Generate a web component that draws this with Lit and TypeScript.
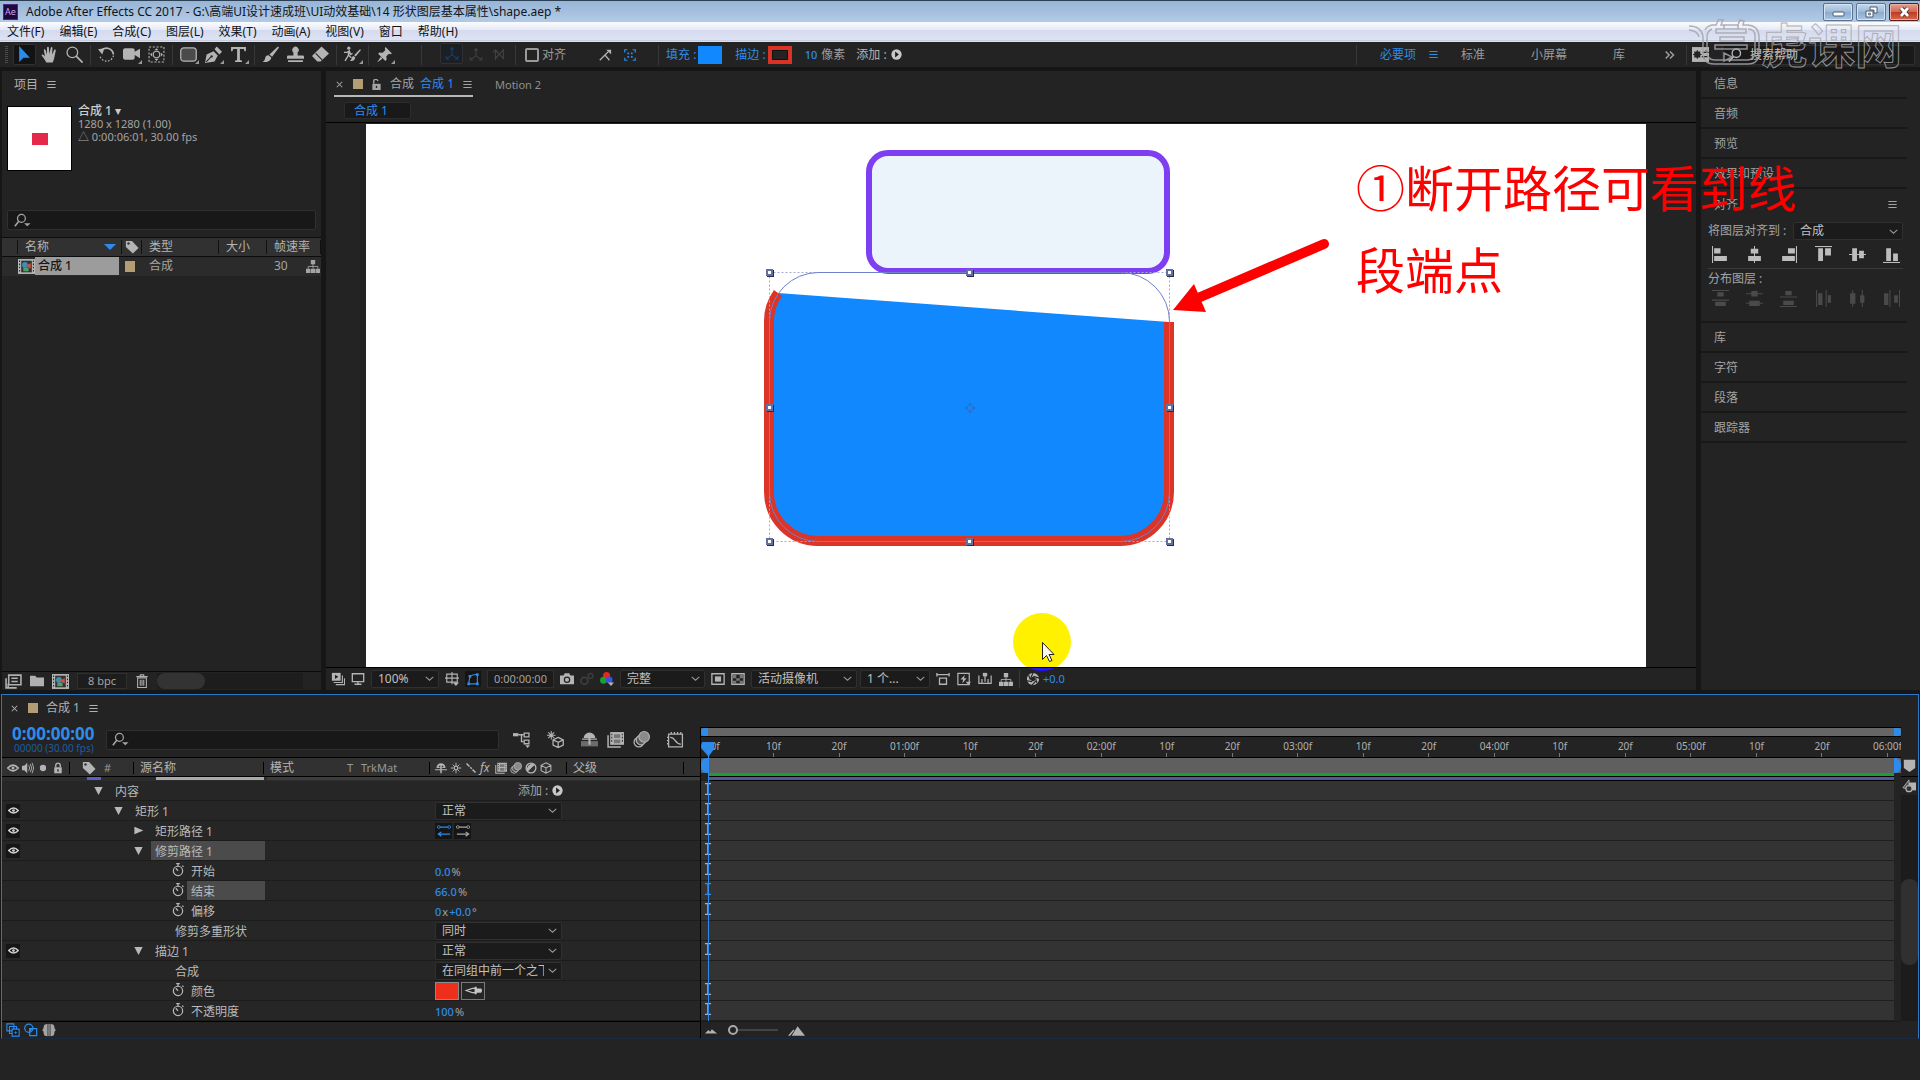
import { LitElement, html, css, svg, nothing } from "lit";
import { customElement, property } from "lit/decorators.js";
import { classMap } from "lit/directives/class-map.js";
import { styleMap } from "lit/directives/style-map.js";

/* Icon shapes, each drawn on a 16 x 16 grid with the current colour. */
const shapes: Record<string, unknown> = {
  arrow: svg`<path d="M3 0v15l4-4h6z" fill="currentColor"/>`,
  hand: svg`<path d="M5 15.500C4 13 1 10 0.500 8.500c.8-.9 2-.2 3.300 1.500L2.600 3.800c.2-1 1.400-1 1.700 0L5.500 8 5.700 1.500c.2-1 1.500-1 1.700 0L7.800 7.600 9.200 1.600c.4-1 1.600-.7 1.600.3L10.400 8l2-4.300c.6-.9 1.700-.4 1.500.6L12.500 11c-.3 2-1 3-1.500 4.500z" fill="currentColor"/>`,
  zoom: svg`<circle cx="6" cy="6" r="5" fill="none" stroke="currentColor" stroke-width="1.200"/><path d="M9.600 9.600l6 6" stroke="currentColor" stroke-width="1.600"/>`,
  rotate: svg`<path d="M3 4.500A6.500 6.500 0 0 1 14.500 8" fill="none" stroke="currentColor" stroke-width="1.600"/><path d="M0 3l6-1-2 6z" fill="currentColor"/><path d="M14.500 9A6.500 6.500 0 0 1 2 10" fill="none" stroke="currentColor" stroke-width="1.200" stroke-dasharray="1.500 1.500"/>`,
  camera: svg`<path d="M0 4q0-2 2-2h7q2 0 2 2v1.500l5-3v9l-5-3V11q0 2-2 2H2q-2 0-2-2z" fill="currentColor"/>`,
  panBehind: svg`<rect x="1" y="1" width="14" height="14" fill="none" stroke="currentColor" stroke-dasharray="2 1.500"/><circle cx="8" cy="8" r="3" fill="none" stroke="currentColor"/><path d="M8 2l2 2H6zM8 14l2-2H6zM2 8l2-2v4zM14 8l-2-2v4z" fill="currentColor"/>`,
  roundRect: svg`<rect x=".7" y="1.700" width="14.600" height="12.600" rx="3" fill="#4a4a4a" stroke="currentColor" stroke-width="1.200"/>`,
  pen: svg`<path d="M0 16l1.500-8L8 5l4 4-3 5.500z" fill="currentColor"/><path d="M9 3l2-2.500L16 5.500 13.500 8z" fill="currentColor"/><path d="M1 15l4.500-4.500" stroke="#232323"/><circle cx="6.200" cy="9.800" r="1.100" fill="#232323"/>`,
  type: svg`<path d="M1 1h14v4h-1.300L13 2.800H9.300v10.400l2 .6V15H4.700v-1.200l2-.6V2.800H3L2.300 5H1z" fill="currentColor"/>`,
  brush: svg`<path d="M15 .5l1 1L9.500 10 7 8zM6.300 8.800L8.800 11c-.8 3.500-4.500 4.500-8.300 4 2-1.200 2-2 2.500-4 .6-1.600 1.900-2.400 3.300-2.200z" fill="currentColor"/>`,
  stamp: svg`<path d="M6 6a3 3 0 1 1 4 0v3h5q1 0 1 1v2H0v-2q0-1 1-1h5zM1 13.500h14v1.500H1z" fill="currentColor"/>`,
  eraser: svg`<path d="M9 .5L16 7l-8 7.500H5L0 9.500z" fill="currentColor"/><path d="M3.500 7l6 6" stroke="#232323"/>`,
  roto: svg`<path d="M15 3l1 .8-5 6-1.500-1zM9 9.500l1.600 1.300c-.3 2.700-2.500 3.700-5.100 3.200 2-1 1.500-4 3.500-4.500z" fill="currentColor"/><circle cx="4.500" cy="2" r="1.500" fill="currentColor"/><path d="M0 6h3l2-1.500L6 8l2-1M4.500 5L4 9l-3 5M4.500 9L7 11" fill="none" stroke="currentColor" stroke-width="1.300"/>`,
  pin: svg`<path d="M9 1l6 6-1.300.7-1.500-.5-2.500 2.500.3 3L8.800 14 2 7.200 3.300 6l3 .3L8.800 3.800 8.300 2.200zM4.500 10L1 15.500 6 12z" fill="currentColor"/>`,
  axis: svg`<path d="M8 9V1M8 9l-6 4M8 9l6 4M6 3l2-2.500L10 3M1 10.500L1.500 13.500 4.500 14M15 10.500l-.5 3-3 .5" fill="none" stroke="currentColor" stroke-width="1.300"/>`,
  axisView: svg`<path d="M4 14V3l9 9V2L4 12M1 5l3-3 3 3" fill="none" stroke="currentColor" stroke-width="1.300"/>`,
  snap: svg`<path d="M2 14l6-6 5 6M8 8l4-4" fill="none" stroke="currentColor" stroke-width="1.400"/><path d="M9.500 2H15v5.500z" fill="currentColor"/>`,
  snapBox: svg`<path d="M2 5V2h3M11 2h3v3M14 11v3h-3M5 14H2v-3" fill="none" stroke="currentColor" stroke-width="1.400"/><path d="M5 5h2v2H5zM9 5h2v2H9zM5 9h2v2H5zM9 9h2v2H9z" fill="currentColor"/>`,
  play: svg`<circle cx="8" cy="8" r="7.500" fill="#c8c8c8"/><path d="M6 3.500L11.500 8 6 12.500z" fill="#1c1c1c"/>`,
  more: svg`<path d="M3 4l4 4-4 4M8 4l4 4-4 4" fill="none" stroke="currentColor" stroke-width="1.800"/>`,
  burger: svg`<path d="M2 3.500h12M2 8h12M2 12.500h12" stroke="currentColor" stroke-width="1.500"/>`,
  lens: svg`<circle cx="9.500" cy="6" r="4.800" fill="none" stroke="currentColor" stroke-width="1.600"/><path d="M6.500 9.500L1 15.500" stroke="currentColor" stroke-width="2"/>`,
  lensMenu: svg`<circle cx="7" cy="6" r="3.700" fill="none" stroke="currentColor" stroke-width="1.200"/><path d="M4.500 8.800L.8 13.500" stroke="currentColor" stroke-width="1.500"/><path d="M9.500 10.500h6l-3 3z" fill="currentColor"/>`,
  settings: svg`<path d="M0 1h16v14H0z" fill="currentColor"/><circle cx="5" cy="8" r="2.300" fill="none" stroke="#232323" stroke-width="1.400"/><path d="M5 4v8M1 8h8M2.200 5.200l5.600 5.600M7.800 5.200l-5.600 5.600M10 6h5l-2-2M15 10h-5l2 2" stroke="#232323" fill="none"/>`,
  openLock: svg`<path d="M2 7h12v9H2z" fill="currentColor"/><path d="M4 7V4a3 3 0 0 1 6-1" fill="none" stroke="currentColor" stroke-width="2"/><path d="M7 10h2v3H7z" fill="#232323"/>`,
  lock: svg`<path d="M3 7h10v8H3z" fill="currentColor"/><path d="M5 7V4.500a3 3 0 0 1 6 0V7" fill="none" stroke="currentColor" stroke-width="1.800"/><path d="M7 9.500h2v3H7z" fill="#333"/>`,
  tag: svg`<path d="M1 1h7l7.500 8-6.500 6.500L1 8z" fill="currentColor"/><circle cx="4" cy="4" r="1.400" fill="#333"/>`,
  flow: svg`<path d="M5.500 1h5v5h-5zM0 11h5v5H0zM5.500 11h5v5h-5zM11 11h5v5h-5z" fill="currentColor"/><path d="M8 5v6M2.500 11V8.500h11V11" fill="none" stroke="currentColor"/>`,
  comp: svg`<path d="M0 1h16v14H0z" fill="#b8b8b8"/><path d="M1 3h1M1 6h1M1 9h1M1 12h1M14 3h1M14 6h1M14 9h1M14 12h1" stroke="#222" stroke-width="1.500"/><path d="M3 2.500h10v11H3z" fill="#333"/><circle cx="6.500" cy="6.500" r="2.700" fill="#3b8fb8"/><path d="M7 7l5-2v5z" fill="#cf4f43"/><path d="M5 9h5v3.500H5z" fill="#4e9f6c"/>`,
  interpret: svg`<path d="M3.500 2H15v9H3.500zM1 5v9h10" fill="none" stroke="currentColor" stroke-width="1.500"/><path d="M6 5h6M6 8h6M3 10v4" stroke="currentColor" stroke-width="1.500"/>`,
  folder: svg`<path d="M0 2h6l1.500 2H16v10H0z" fill="currentColor"/>`,
  trash: svg`<path d="M3 4.500h10V15.500H3zM1.500 3h13M6 3V1h4v2M6 6.500v7M8 6.500v7M10 6.500v7" fill="none" stroke="currentColor" stroke-width="1.200"/>`,
  preview: svg`<path d="M1 1h10v9H1z" fill="currentColor"/><path d="M4.500 3l4 2.500-4 2.500z" fill="#222"/><path d="M3 12h10V4M5.500 14.500h10V7" fill="none" stroke="currentColor" stroke-width="1.300"/>`,
  monitor: svg`<path d="M1.500 2h13v9h-13zM8 11v3M4 14h8" fill="none" stroke="currentColor" stroke-width="1.500"/>`,
  grid: svg`<path d="M2 2.500h12v9H2zM8 0v14M0 7h16" fill="none" stroke="currentColor" stroke-width="1.300"/><path d="M9 12h7l-3.500 4z" fill="currentColor"/>`,
  mask: svg`<path d="M3 13.500L4.500 5Q8 2.500 13 3v10.500z" fill="none" stroke="currentColor" stroke-width="1.300"/><path d="M1.500 12h3v3h-3zM11.500 12h3v3h-3zM11.500 1.500h3v3h-3zM3 3.500h3v3H3z" fill="currentColor"/>`,
  photo: svg`<path d="M0 4h4l1.500-2.500h5L12 4h4v10H0z" fill="currentColor"/><circle cx="8" cy="8.800" r="3" fill="none" stroke="#232323" stroke-width="1.400"/>`,
  showShot: svg`<circle cx="5" cy="10" r="4" fill="none" stroke="currentColor" stroke-width="2"/><circle cx="12" cy="4.500" r="2.800" fill="none" stroke="currentColor" stroke-width="1.500"/>`,
  rgb: svg`<circle cx="7.500" cy="4" r="4" fill="#e8261f"/><circle cx="4" cy="9.500" r="4" fill="#17a32d"/><circle cx="10.500" cy="9" r="3.800" fill="#3655e0"/><path d="M9 12h7l-3.500 4z" fill="#b4b4b4"/>`,
  region: svg`<path d="M1 2h14v12H1z" fill="none" stroke="currentColor" stroke-width="1.500"/><path d="M4.500 5h7v6h-7z" fill="currentColor"/>`,
  checker: svg`<path d="M1 2h14v12H1z" fill="none" stroke="currentColor" stroke-width="1.500"/><path d="M2 3h4v4H2zM10 3h4v4h-4zM6 7h4v3H6zM2 10h4v3.500H2zM10 10h4v3.500h-4z" fill="#777"/>`,
  pixel: svg`<path d="M4 7h8v7H4zM1 3h14M1 1v4M15 1v4" fill="none" stroke="currentColor" stroke-width="1.500"/>`,
  fast: svg`<path d="M1 1.500h13v13H1z" fill="none" stroke="currentColor" stroke-width="1.400"/><path d="M9 3L4 8.500h3L6 13l5-6H8z" fill="currentColor"/><path d="M10 11h6l-3 4z" fill="currentColor"/>`,
  timelineIcon: svg`<path d="M1 4v9h14V4M4.500 13V8M11.500 13V8M8 11V3" fill="none" stroke="currentColor" stroke-width="1.400"/><path d="M5.500 1h5v4h-5z" fill="currentColor"/>`,
  aperture: svg`<circle cx="8" cy="8" r="7" fill="currentColor"/><path d="M8 1L5 8M15 7L8.500 5M12.500 13L11 7M7 15l4-4.500M1 10l6 1M3 3.500L5 9" stroke="#232323" stroke-width="1.300"/><circle cx="8" cy="8" r="2.500" fill="#232323"/>`,
  chevron: svg`<path d="M2.500 5.500l5.500 5 5.500-5" fill="none" stroke="currentColor" stroke-width="1.500"/>`,
  eye: svg`<path d="M1 8Q8 .5 15 8 8 15.500 1 8z" fill="none" stroke="currentColor" stroke-width="2.200"/><circle cx="8" cy="8" r="2" fill="currentColor"/>`,
  speaker: svg`<path d="M0 5h3l4-4v14l-4-4H0z" fill="currentColor"/><path d="M9 4.500q2.500 3.500 0 7M11 2.500q4 5.500 0 11M13.500 1q4 7 0 14" fill="none" stroke="currentColor" stroke-width="1.200"/>`,
  dot: svg`<circle cx="8" cy="8" r="4.200" fill="currentColor"/>`,
  shy: svg`<path d="M2 8a6 6.500 0 0 1 12 0zM0 9.500h16V11H0zM7 7h2v8H7z" fill="currentColor"/><path d="M5 5h2v2H5zM9 5h2v2H9z" fill="#333"/>`,
  sun: svg`<circle cx="8" cy="8" r="2.500" fill="none" stroke="currentColor" stroke-width="1.600"/><path d="M8 1v4M8 11v4M1 8h4M11 8h4M3.500 3.500L5.500 5.500M10.500 10.500l2 2M12.500 3.500l-2 2M3.500 12.500l2-2" stroke="currentColor" stroke-width="1.300"/>`,
  slash: svg`<path d="M2 2l4 4M7 7l2 2M10 10l4 4" stroke="currentColor" stroke-width="2"/>`,
  film: svg`<path d="M3 1h13v12H3z" fill="currentColor"/><path d="M1 4v11h12" fill="none" stroke="currentColor" stroke-width="1.400"/><path d="M6.500 3h6v3.500h-6zM6.500 8h6v3.500h-6z" fill="#777"/><path d="M4.500 2.500v9M14.500 2.500v9" stroke="#333" stroke-dasharray="1.500 1.500"/>`,
  blur: svg`<circle cx="5.500" cy="10.500" r="4.500" fill="none" stroke="currentColor" stroke-width="1.200"/><circle cx="7.500" cy="8.500" r="4.500" fill="#555" stroke="currentColor" stroke-width="1.200"/><circle cx="10.500" cy="5.500" r="5" fill="#8a8a8a" stroke="currentColor"/>`,
  adjust: svg`<circle cx="8" cy="8" r="6.500" fill="none" stroke="currentColor" stroke-width="1.800"/><path d="M13 3.500A7 7 0 0 0 3.500 13z" fill="currentColor"/>`,
  cube: svg`<path d="M8 1l6.500 3.500v7L8 15l-6.500-3.500v-7zM1.500 4.500L8 8l6.500-3.500M8 8v7" fill="none" stroke="currentColor" stroke-width="1.400"/>`,
  miniFlow: svg`<path d="M0 2h5v3H0z" fill="currentColor"/><path d="M5 3.500h5M8 3.500V10h2" fill="none" stroke="currentColor" stroke-width="1.300"/><path d="M10.500 2H15v3.500h-4.500zM10.500 8.500H15V12h-4.500z" fill="none" stroke="currentColor" stroke-width="1.200"/><path d="M11.500 13.500H16L13.800 16z" fill="currentColor"/>`,
  draft: svg`<path d="M10.500 6l4.800 2.300v5l-4.800 2.300-4.800-2.300v-5zM5.700 8.300l4.800 2.400 4.800-2.400M10.500 10.700v5" fill="none" stroke="currentColor" stroke-width="1.200"/><path d="M4 0v8M0 4h8M1.200 1.200l5.600 5.600M6.800 1.200L1.200 6.800" stroke="currentColor"/>`,
  hideShy: svg`<path d="M0 9.500h16V14.500H0z" fill="#6c6c6c"/><path d="M2.500 6.500a5.500 5 0 0 1 11 0zM7 6h2v7H7zM1 7h14v1.300H1z" fill="currentColor"/>`,
  graph: svg`<path d="M1.500 3h13v12h-13zM4 1v2M7 1v2M10 1v2M13 1v2M0 6h1.500M0 9h1.500M0 12h1.500" fill="none" stroke="currentColor" stroke-width="1.200"/><path d="M3 6c5-.5 4 6 10 6.500" fill="none" stroke="currentColor" stroke-width="1.300"/>`,
  watch: svg`<circle cx="8" cy="9" r="5.300" fill="none" stroke="currentColor" stroke-width="1.400"/><path d="M6 .8h4M8 1v3M12.800 3l1.500 1.500M8 9L5.500 6" stroke="currentColor" stroke-width="1.400"/>`,
  down: svg`<path d="M2 3h12L8 14.500z" fill="currentColor"/>`,
  right: svg`<path d="M2 2.500L15 8 2 13.500z" fill="currentColor"/>`,
  alignLeft: svg`<path d="M.5 0v16" stroke="currentColor"/><path d="M2 2h6v5H2zM2 9.500h12v4.500H2z" fill="currentColor"/>`,
  alignCenter: svg`<path d="M8 0v16" stroke="currentColor"/><path d="M4.500 2.500h7v4.500h-7zM2 9.500h12v4.500H2z" fill="currentColor"/>`,
  alignRight: svg`<path d="M15.500 0v16" stroke="currentColor"/><path d="M7.500 2H14v5H7.500zM2 9.500h12v4.500H2z" fill="currentColor"/>`,
  alignTop: svg`<path d="M0 .5h16" stroke="currentColor"/><path d="M3 2h4.500v12H3zM9.500 2H15v7H9.500z" fill="currentColor"/>`,
  alignMiddle: svg`<path d="M0 8h16" stroke="currentColor"/><path d="M3 2h4.500v12H3zM9.500 4.500H14v7H9.500z" fill="currentColor"/>`,
  alignBottom: svg`<path d="M0 15.500h16" stroke="currentColor"/><path d="M3 2h4.500v12H3zM9.500 7H14v7H9.500z" fill="currentColor"/>`,
  distTop: svg`<path d="M0 .5h16M0 9.500h16" stroke="currentColor"/><path d="M5 2h6v4H5zM3 11h10v4H3z" fill="currentColor"/>`,
  distMiddle: svg`<path d="M0 3.500h16M0 12.500h16" stroke="currentColor"/><path d="M5 1h6v5H5zM3 10h10v5H3z" fill="currentColor"/>`,
  distBottom: svg`<path d="M0 6.500h16M0 15.500h16" stroke="currentColor"/><path d="M5 1h6v4H5zM3 10h10v4H3z" fill="currentColor"/>`,
  distLeft: svg`<path d="M1.500 0v16M10.500 0v16" stroke="currentColor"/><path d="M3 3h4v11H3zM12 5h3v7h-3z" fill="currentColor"/>`,
  distCenter: svg`<path d="M3.500 0v16M12.500 0v16" stroke="currentColor"/><path d="M1 3h5v10H1zM10.500 5h4v7h-4z" fill="currentColor"/>`,
  distRight: svg`<path d="M6.500 0v16M15.500 0v16" stroke="currentColor"/><path d="M1 3h4v11H1zM10.500 5H14v7h-3.500z" fill="currentColor"/>`,
  layersA: svg`<path d="M1 1h8v8H1zM4 4h8v8H4z" fill="none" stroke="currentColor" stroke-width="1.200"/><path d="M7 7h8v8H7z" fill="#1a1a1a" stroke="currentColor" stroke-width="1.200"/><path d="M11 9.500v3M9.500 11h3" stroke="currentColor"/>`,
  layersB: svg`<circle cx="5.500" cy="6" r="4.700" fill="none" stroke="currentColor" stroke-width="1.400"/><path d="M6.500 6.500h8v8h-8z" fill="none" stroke="currentColor" stroke-width="1.400"/><path d="M6.500 6.500H10l-3.500 4z" fill="currentColor"/>`,
  braces: svg`<path d="M2 4q0-3 4-3v14q-4 0-4-3 0-3-2-4 2-1 2-4zM14 4q0-3-4-3v14q4 0 4-3 0-3 2-4-2-1-2-4z" fill="currentColor"/><path d="M6 1h4v14H6z" fill="#777"/>`,
  revOn: svg`<path d="M2 3.500h12M2 11.500h13M5 9l-3.500 2.500L5 14" fill="none" stroke="currentColor" stroke-width="1.400"/><circle cx="2" cy="3.500" r="1.600" fill="#151515" stroke="currentColor"/><circle cx="14" cy="3.500" r="1.600" fill="#151515" stroke="currentColor"/>`,
  revOff: svg`<path d="M2 3.500h12M1 11.500h13M11 9l3.500 2.500L11 14" fill="none" stroke="currentColor" stroke-width="1.400"/><circle cx="2" cy="3.500" r="1.600" fill="#151515" stroke="currentColor"/><circle cx="14" cy="3.500" r="1.600" fill="#151515" stroke="currentColor"/>`,
  dropper: svg`<path d="M1 8l6-2h3v4H7z" fill="none" stroke="currentColor"/><path d="M9 4.500h2V6h4q1 0 1 2t-1 2h-4v1.500H9z" fill="currentColor"/>`,
  hillSmall: svg`<path d="M1 12l4-4 2 2 2-3 6 5z" fill="currentColor"/>`,
  hillBig: svg`<path d="M0 13l5-6 1 1-4 5zM3.500 13L9 4l7 9z" fill="currentColor"/>`,
  marker: svg`<path d="M1 1h14v10l-7 5-7-5z" fill="currentColor"/>`,
  compButton: svg`<path d="M8 4h8v9H8z" fill="currentColor"/><path d="M1 10L8 1v11z" fill="#555" stroke="currentColor"/><circle cx="8" cy="11" r="3.500" fill="#333" stroke="currentColor" stroke-width="1.300"/>`,
  cross: svg`<path d="M4 4l8 8M12 4l-8 8" stroke="currentColor" stroke-width="1.500"/>`,
};

const icon = (name: string, size: "s" | "m" | "l" = "m") =>
  html`<svg class="ic ${size}" viewBox="0 0 16 16" aria-hidden="true">${shapes[name]}</svg>`;

const iconCss = css`
  .ic { display: block; flex: none; width: 14px; height: 14px; }
  .ic.s { width: 11px; height: 11px; }
  .ic.l { width: 17px; height: 17px; }
`;

const base = css`
  * { box-sizing: border-box; }
  :host { font: 12px/16px "Noto Sans", "Noto Sans CJK SC", sans-serif; color: #a4a4a4; }
  button, input, select { font: inherit; color: inherit; margin: 0; padding: 0; border: 0; background: none; outline: 0; }
  button { display: inline-flex; align-items: center; justify-content: center; white-space: nowrap; }
  a { color: inherit; text-decoration: none; }
  .blue { color: #2d8ceb; }
`;

/* Drop-down with its own chevron. */
@customElement("drop-down")
class DropDown extends LitElement {
  static styles = [base, iconCss, css`
    :host { display: block; }
    .box { display: grid; height: 18px; background: #1b1b1b; border: 1px solid #303030; border-radius: 2px; align-items: center; }
    select { grid-area: 1 / 1; appearance: none; width: 100%; height: 16px; line-height: 16px; padding: 0 17px 0 6px; color: #c0c0c0; overflow: hidden; }
    .ic { grid-area: 1 / 1; justify-self: end; margin-right: 3px; pointer-events: none; color: #9a9a9a; width: 10px; height: 10px; }
  `];
  @property() value = "";
  @property() name = "";
  render() {
    return html`<div class="box"><select aria-label=${this.name}><option>${this.value}</option></select>${icon("chevron", "s")}</div>`;
  }
}

@customElement("title-bar")
class TitleBar extends LitElement {
  static styles = [base, iconCss, css`
    :host { display: block; color: #101418; }
    .bar { display: flex; align-items: center; height: 22px; padding: 0 1px 0 3px; border-top: 1px solid #2b3f55; background: linear-gradient(#98b5d6, #b2cae6); }
    .logo { width: 15px; height: 16px; background: #1f0740; border: 1px solid #4a2d7a; color: #c9a6f5; font-size: 9px; line-height: 14px; text-align: center; }
    h1 { flex: 1; margin: 0 0 0 8px; font-size: 12px; font-weight: 400; line-height: 20px; white-space: nowrap; }
    .win { display: flex; gap: 3px; }
    .win button { width: 30px; height: 18px; border: 1px solid #5a7191; border-radius: 2px; background: linear-gradient(#c5d8ec, #9cb8d6 50%, #8aabcf 50%, #a9c6e2); box-shadow: inset 0 0 0 1px #d4e2f1; }
    .win .close { background: linear-gradient(#e6a191, #d26550 50%, #bd3a22 50%, #d6684c); border-color: #5a1f1a; box-shadow: inset 0 0 0 1px #eab0a2; }
    .win svg { width: 13px; height: 12px; }
    nav { display: flex; align-items: center; gap: 15px; height: 20px; padding: 0 7px; background: linear-gradient(#fbfcfe, #e6eaf6 38%, #d5dbee 42%, #dde3f3 90%, #b9c0d4 94%, #f4f6fb); }
    nav button { line-height: 18px; }
  `];
  render() {
    const menus = ["文件(F)", "编辑(E)", "合成(C)", "图层(L)", "效果(T)", "动画(A)", "视图(V)", "窗口", "帮助(H)"];
    return html`
      <header class="bar">
        <span class="logo">Ae</span>
        <h1>Adobe After Effects CC 2017 - G:\\高端UI设计速成班\\UI动效基础\\14 形状图层基本属性\\shape.aep *</h1>
        <div class="win">
          <button aria-label="最小化"><svg viewBox="0 0 13 12"><rect x="1" y="6" width="11" height="4" rx="1" fill="#fff" stroke="#4a5a70"/></svg></button>
          <button aria-label="还原"><svg viewBox="0 0 13 12"><path d="M5 1h7v6H9V4H5zM1 5h7v6H1z" fill="#fff" stroke="#4a5a70"/><path d="M3.500 7h2v2h-2z" fill="#8aa" stroke="#4a5a70" stroke-width=".6"/></svg></button>
          <button class="close" aria-label="关闭"><svg viewBox="0 0 13 12"><path d="M3 2l7 8M10 2l-7 8" stroke="#54302f" stroke-width="4.500"/><path d="M3 2l7 8M10 2l-7 8" stroke="#fff" stroke-width="2.800"/></svg></button>
        </div>
      </header>
      <nav>${menus.map((m) => html`<button>${m}</button>`)}</nav>`;
  }
}

@customElement("tool-bar")
class ToolBar extends LitElement {
  static styles = [base, iconCss, css`
    :host { display: block; }
    .bar { display: flex; align-items: center; height: 25px; background: #232323; color: #b4b4b4; }
    .grip { width: 3px; height: 18px; margin: 0 4px 0 5px; background: repeating-linear-gradient(#4a4a4a 0 1px, transparent 1px 2px); }
    .tool { position: relative; width: 25px; height: 23px; }
    .tool.on { background: #131313; border: 1px solid #303030; border-radius: 2px; color: #2d8ceb; width: 23px; margin: 0 1px; height: 21px; }
    .tool.menu::after { content: ""; position: absolute; right: 2px; bottom: 2px; border: 2px solid transparent; border-right-color: #999; border-bottom-color: #999; }
    .sep { width: 1px; height: 20px; margin: 0 3px; background: #383838; }
    .gap { width: 21px; }
    .axes { display: flex; padding: 0 2px 0 14px; color: #414141; }
    .axes .tool { width: 23px; }
    .axes .on { color: #17406e; background: #1c1f24; }
    .check { display: flex; align-items: center; gap: 3px; padding: 0 26px 0 6px; color: #9b9b9b; }
    .check input { appearance: none; width: 14px; height: 14px; border: 2px solid #9b9b9b; border-radius: 2px; }
    .opts { display: flex; padding-right: 13px; }
    .opt { display: flex; align-items: center; gap: 2px; margin: 0 9px 0 4px; }
    .fill { width: 24px; height: 18px; background: #1288ff; }
    .stroke { width: 24px; height: 18px; background: #232323; border: 4px solid #d93325; box-shadow: inset 0 0 0 1px #111; }
    .px { gap: 4px; color: #9b9b9b; }
    .px b { font-size: 11px; font-weight: 500; }
    .add { gap: 4px; margin-left: 2px; }
    .grow { flex: 1; }
    .spaces { display: flex; align-items: center; color: #9b9b9b; padding-left: 20px; }
    .spaces button { margin-right: 46px; }
    .spaces button.act { margin-right: 12px; }
    .spaces .b2 { margin-right: 22px; }
    .spaces .lib { margin-right: 38px; }
    .spaces .mr { margin-right: 6px; }
    .set { margin: 0 12px 0 1px; width: 19px; }
    .search { display: flex; align-items: center; gap: 8px; width: 193px; height: 20px; margin-right: 5px; padding-left: 5px; border: 1px solid #2f2f2f; border-radius: 2px; background: #191919; }
    .search input { flex: 1; min-width: 0; }
    .search input::placeholder { color: #c4c4c4; opacity: 1; }
  `];
  tool(name: string, label: string, menu = false) {
    return html`<button class=${classMap({ tool: true, menu })} aria-label=${label}>${icon(name, "l")}</button>`;
  }
  render() {
    const sep = html`<i class="sep"></i>`;
    return html`<div class="bar">
      <i class="grip"></i>
      <button class="tool on" aria-label="选取">${icon("arrow", "l")}</button>
      ${this.tool("hand", "手形")}${this.tool("zoom", "缩放")}${sep}
      ${this.tool("rotate", "旋转")}${this.tool("camera", "摄像机", true)}${this.tool("panBehind", "锚点")}${sep}
      ${this.tool("roundRect", "圆角矩形", true)}${this.tool("pen", "钢笔", true)}${this.tool("type", "文字", true)}${sep}
      ${this.tool("brush", "画笔")}${this.tool("stamp", "仿制图章")}${this.tool("eraser", "橡皮擦")}${sep}
      ${this.tool("roto", "Roto 笔刷", true)}${sep}${this.tool("pin", "操控点", true)}
      <i class="gap"></i>${sep}
      <div class="axes"><button class="tool on" aria-label="本地轴">${icon("axis")}</button><button class="tool" aria-label="世界轴">${icon("axis")}</button><button class="tool" aria-label="视图轴">${icon("axisView")}</button></div>
      ${sep}
      <label class="check"><input type="checkbox" />对齐</label>
      <div class="opts"><button class="tool" aria-label="对齐选项">${icon("snap")}</button><button class="tool blue" aria-label="对齐边界">${icon("snapBox")}</button></div>
      ${sep}
      <div class="opt"><a class="blue" href="#">填充 :</a><button class="fill" aria-label="填充颜色"></button></div>
      <div class="opt"><a class="blue" href="#">描边 :</a><button class="stroke" aria-label="描边颜色"></button></div>
      <div class="opt px"><b class="blue">10</b>像素</div>
      <div class="opt add">添加 : <button aria-label="添加">${icon("play", "s")}</button></div>
      <i class="grow"></i>${sep}
      <div class="spaces">
        <button class="blue act">必要项</button><button class="blue b2" aria-label="工作区菜单">${icon("burger", "s")}</button>
        <button>标准</button><button>小屏幕</button><button class="lib">库</button><button class="mr" aria-label="更多">${icon("more")}</button>
      </div>
      ${sep}<button class="set" aria-label="同步设置">${icon("settings", "l")}</button>
      <label class="search">${icon("lens")}<input placeholder="搜索帮助" aria-label="搜索帮助" /></label>
    </div>`;
  }
}

@customElement("project-panel")
class ProjectPanel extends LitElement {
  static styles = [base, iconCss, css`
    :host { display: flex; flex-direction: column; background: #232323; }
    .head { display: flex; align-items: center; gap: 8px; height: 27px; padding-left: 12px; color: #b0b0b0; }
    .info { display: flex; gap: 6px; height: 106px; padding: 6px 5px 0; font-size: 11px; line-height: 13px; }
    .thumb { display: grid; place-items: center; width: 65px; height: 65px; margin-top: 2px; background: #fff; border: 1px solid #000; }
    .thumb i { width: 16px; height: 12px; background: #e5294b; }
    .info h2 { margin: 0; font-size: 12px; line-height: 13px; color: #ccc; font-weight: 500; }
    .info p { margin: 0; white-space: nowrap; }
    .search { display: flex; align-items: center; height: 20px; margin: 6px 5px 7px; padding-left: 6px; border: 1px solid #303030; border-radius: 2px; background: #181818; }
    .search input { flex: 1; }
    table { width: 100%; border-collapse: collapse; table-layout: fixed; border-top: 1px solid #0c0c0c; }
    th, td { height: 19px; padding: 0; font-weight: 400; text-align: left; line-height: 16px; }
    thead { background: #313131; color: #b4b4b4; }
    thead tr { border-bottom: 1px solid #0c0c0c; }
    th span, td span { display: flex; align-items: center; border-right: 1px solid #111; height: 14px; padding-left: 7px; }
    td span { border: 0; height: 18px; }
    th .nm { justify-content: space-between; padding: 0 5px 0 7px; }
    th .tg { padding-left: 3px; }
    tbody { background: #2b2b2b; }
    .item { display: flex; align-items: center; margin-right: 3px; }
    td .sel { flex: 1; background: #9c9c9c; color: #161616; font-weight: 500; padding-left: 3px; }
    .c0 { width: 16px; } .c1 { width: 104px; } .c2 { width: 20px; } .c3 { width: 77px; } .c4 { width: 48px; }
    .sw { width: 10px; height: 11px; background: #b29d75; margin-left: 3px; }
    td .fr { padding: 0 1px 0 7px; justify-content: space-between; }
    .rest { flex: 1; }
    .foot { display: flex; align-items: center; height: 19px; border-top: 1px solid #0a0a0a; padding-left: 3px; gap: 8px; color: #b0b0b0; }
    .bpc { width: 50px; height: 16px; font-size: 11px; line-height: 14px; border: 1px solid #2f2f2f; background: #1d1d1d; color: #a4a4a4; }
    .thumbbar { flex: 1; margin-right: 18px; background: #1d1d1d; height: 16px; }
    .thumbbar i { display: block; width: 48px; height: 16px; border-radius: 8px; background: #333; }
  `];
  render() {
    return html`
      <div class="head"><span>项目</span>${icon("burger", "s")}</div>
      <div class="info">
        <div class="thumb"><i></i></div>
        <div><h2>合成 1 ▾</h2><p>1280 x 1280 (1.00)</p><p>△ 0:00:06:01, 30.00 fps</p></div>
      </div>
      <label class="search">${icon("lensMenu", "l")}<input aria-label="搜索项目" /></label>
      <table>
        <colgroup><col class="c0" /><col class="c1" /><col class="c2" /><col class="c3" /><col class="c4" /><col /></colgroup>
        <thead><tr><th><span></span></th><th><span class="nm">名称<svg class="blue" width="12" height="6"><path d="M0 0h12L6 6z" fill="currentColor"/></svg></span></th><th><span class="tg">${icon("tag")}</span></th><th><span>类型</span></th><th><span>大小</span></th><th><span>帧速率</span></th></tr></thead>
        <tbody><tr><td></td><td><div class="item">${icon("comp", "l")}<span class="sel">合成 1</span></div></td><td><i class="sw ic"></i></td><td><span>合成</span></td><td></td><td><span class="fr">30 ${icon("flow")}</span></td></tr></tbody>
      </table>
      <div class="rest"></div>
      <div class="foot">${icon("interpret", "l")}${icon("folder")}${icon("comp", "l")}<button class="bpc">8 bpc</button>${icon("trash")}<div class="thumbbar"><i></i></div></div>`;
  }
}

@customElement("comp-viewer")
class CompViewer extends LitElement {
  static styles = [base, iconCss, css`
    :host { display: flex; flex-direction: column; min-width: 0; background: #232323; }
    .tabs { display: flex; align-items: center; height: 26px; padding-left: 8px; }
    .tab { display: flex; align-items: center; gap: 8px; height: 26px; padding-top: 2px; border-bottom: 2px solid #b8b8b8; }
    .tab .sw { width: 10px; height: 10px; background: #b29d75; }
    .tab .nm { display: flex; gap: 6px; }
    .other { margin-left: 22px; padding-top: 2px; font-size: 11px; color: #8f8f8f; }
    .flow { height: 26px; padding: 5px 0 0 18px; border-bottom: 1px solid #000; }
    .flow button { justify-content: flex-start; width: 67px; height: 17px; padding-left: 9px; background: #191919; border: 1px solid #2c2c2c; border-radius: 2px; }
    .stage { flex: 1; min-height: 0; margin: 1px 50px 0 40px; background: #fff; }
    .stage svg { display: block; width: 100%; height: 100%; min-height: 543px; overflow: visible; }
    .foot { display: flex; align-items: center; gap: 6px; height: 23px; padding: 0 0 1px 5px; border-top: 1px solid #000; color: #b4b4b4; }
    .foot .zoom { width: 68px; } .foot .res { width: 85px; } .foot .cam { width: 106px; } .foot .views { width: 70px; }
    .foot .tc { width: 67px; height: 18px; font-size: 11px; border: 1px solid #303030; background: #1b1b1b; color: #a4a4a4; }
    .foot .mask { padding: 1px; background: #141414; }
    .dim { color: #3d3d3d; }
    .set { font-size: 11px; }
    .pair { display: flex; gap: 3px; align-items: center; }
    .trio { display: flex; gap: 7px; }
    .sep { width: 1px; height: 18px; background: #3a3a3a; }
  `];
  render() {
    const handles = [[769, 272], [969, 272], [1169, 272], [769, 407], [1169, 407], [769, 541], [969, 541], [1169, 541]];
    return html`
      <div class="tabs">
        <div class="tab">${icon("cross", "s")}<i class="sw"></i>${icon("openLock", "s")}<span class="nm">合成 <span class="blue">合成 1</span></span>${icon("burger", "s")}</div>
        <button class="other">Motion 2</button>
      </div>
      <div class="flow"><button class="blue">合成 1</button></div>
      <div class="stage"><svg viewBox="366 124 1280 543">
        <defs>
          <clipPath id="in"><path d="M366 124h1280v543H366z"/></clipPath>
          <clipPath id="out"><path d="M366 667h1280v20H366z"/></clipPath>
        </defs>
        <rect x="869" y="153" width="298" height="118" rx="19" fill="#ebf3fb" stroke="#7e3ff2" stroke-width="6"/>
        <path d="M1169 322V492A49 49 0 0 1 1120 541H818A49 49 0 0 1 769 492V322A49 49 0 0 1 778 293z" fill="#1288ff"/>
        <path d="M1169 322V492A49 49 0 0 1 1120 541H818A49 49 0 0 1 769 492V322A49 49 0 0 1 778 293" fill="none" stroke="#dc3527" stroke-width="10"/>
        <rect x="769.500" y="272.500" width="400" height="269" fill="none" stroke="#a3a9d8" stroke-dasharray="2 2"/>
        <rect x="769.500" y="272.500" width="400" height="269" rx="49" fill="none" stroke="#6f80cc"/>
        ${handles.map(([x, y]) => svg`<g><rect x=${x - 2} y=${y - 2} width="7" height="7" fill="#262c50"/><rect x=${x - 3} y=${y - 3} width="7" height="7" fill="#6670a0"/><rect x=${x - 1} y=${y - 1} width="3" height="3" fill="#fff"/></g>`)}
        <circle cx="970" cy="408" r="3" fill="none" stroke="#3b6cc0"/>
        <path d="M970 403v2M970 411v2M965 408h2M973 408h2" stroke="#2c5ca8"/>
        <circle cx="1042" cy="642" r="29" fill="#fff100" clip-path="url(#in)"/>
        <circle cx="1042" cy="642" r="29" fill="#2418f0" clip-path="url(#out)"/>
        <path d="M1042.500 642.500v17l4-4 3 6 2.500-1-3-6h5z" fill="#fdf6ee" stroke="#222"/>
      </svg></div>
      <div class="foot">
        ${icon("preview")}${icon("monitor")}<drop-down class="zoom" name="放大率" value="100%"></drop-down>
        ${icon("grid")}<span class="mask blue">${icon("mask")}</span><button class="tc">0:00:00:00</button>
        ${icon("photo")}<span class="dim">${icon("showShot")}</span>${icon("rgb")}
        <drop-down class="res" name="分辨率" value="完整"></drop-down>
        ${icon("region")}${icon("checker")}<div class="pair"><drop-down class="cam" name="3D 视图" value="活动摄像机"></drop-down>
        <drop-down class="views" name="视图布局" value="1 个..."></drop-down></div>
        <div class="trio">${icon("pixel")}${icon("fast")}${icon("timelineIcon")}${icon("flow")}</div><i class="sep"></i>
        <div class="pair">${icon("aperture")}<span class="set blue">+0.0</span></div>
      </div>`;
  }
}

@customElement("side-panels")
class SidePanels extends LitElement {
  static styles = [base, iconCss, css`
    :host { display: block; background: #232323; }
    .inner { margin-right: 13px; }
    .row { display: flex; align-items: center; justify-content: space-between; width: 100%; height: 30px; padding: 2px 9px 0 13px; border-bottom: 2px solid #181818; }
    .row.open { border: 0; height: 29px; }
    .first { height: 28px; padding-top: 0; }
    .align { padding: 4px 4px 0 7px; }
    .to { display: flex; align-items: center; justify-content: space-between; }
    .to drop-down { width: 110px; }
    .btns { display: flex; justify-content: space-between; padding: 6px 3px 5px 4px; color: #bdbdbd; }
    .dist { color: #4a4a4a; padding: 3px 3px 14px 4px; }
    hr { border: 0; border-top: 1px solid #3a3a3a; margin: 0; }
    .sub { margin: 0; padding-top: 2px; line-height: 16px; }
    .mid { border-bottom: 2px solid #181818; }
  `];
  render() {
    const row = (t: string, first = false) => html`<button class=${classMap({ row: true, first })}>${t}</button>`;
    const btn = (n: string) => html`<button aria-label=${n}>${icon(n, "l")}</button>`;
    return html`<div class="inner">
      ${row("信息", true)}${["音频", "预览", "效果和预设"].map((t) => row(t))}
      <div class="row open"><span>对齐</span>${icon("burger", "s")}</div>
      <div class="mid align">
        <div class="to"><span>将图层对齐到 :</span><drop-down name="将图层对齐到" value="合成"></drop-down></div>
        <div class="btns">${["alignLeft", "alignCenter", "alignRight", "alignTop", "alignMiddle", "alignBottom"].map(btn)}</div>
        <hr /><p class="sub">分布图层 :</p>
        <div class="btns dist">${["distTop", "distMiddle", "distBottom", "distLeft", "distCenter", "distRight"].map(btn)}</div>
      </div>
      ${["库", "字符", "段落", "跟踪器"].map((t) => row(t))}
    </div>`;
  }
}

interface TreeRow {
  name: string;
  depth: number;
  mark?: "down" | "right" | "watch";
  eye?: boolean;
  selected?: boolean;
  beam?: "on" | "key";
  value?: unknown;
}

const menu = (name: string, value: string) => html`<drop-down class="dd" name=${name} value=${value}></drop-down>`;

const rows: TreeRow[] = [
  { name: "内容", depth: 0, mark: "down", beam: "on", value: html`<span class="add">添加 : <button aria-label="添加">${icon("play", "s")}</button></span>` },
  { name: "矩形 1", depth: 1, mark: "down", eye: true, beam: "on", value: menu("矩形 1 模式", "正常") },
  { name: "矩形路径 1", depth: 2, mark: "right", eye: true, beam: "on", value: html`<button class="rev blue" aria-label="反转路径方向关">${icon("revOn")}</button><button class="rev" aria-label="反转路径方向开">${icon("revOff")}</button>` },
  { name: "修剪路径 1", depth: 2, mark: "down", eye: true, selected: true, beam: "on" },
  { name: "开始", depth: 4, mark: "watch", beam: "on", value: html`<span class="num"><b>0.0</b><span>%</span></span>` },
  { name: "结束", depth: 4, mark: "watch", selected: true, beam: "key", value: html`<span class="num"><b>66.0</b><span>%</span></span>` },
  { name: "偏移", depth: 4, mark: "watch", beam: "on", value: html`<span class="num"><b>0</b><span>x</span><b>+0.0</b><span>°</span></span>` },
  { name: "修剪多重形状", depth: 3, value: menu("修剪多重形状", "同时") },
  { name: "描边 1", depth: 2, mark: "down", eye: true, beam: "on", value: menu("描边 1 模式", "正常") },
  { name: "合成", depth: 3, value: menu("合成", "在同组中前一个之下") },
  { name: "颜色", depth: 4, mark: "watch", beam: "on", value: html`<button class="color" aria-label="颜色"></button><button class="drop" aria-label="吸管">${icon("dropper", "l")}</button>` },
  { name: "不透明度", depth: 4, mark: "watch", beam: "on", value: html`<span class="num"><b>100</b><span>%</span></span>` },
];

@customElement("time-line")
class TimeLine extends LitElement {
  static styles = [base, iconCss, css`
    :host { display: block; margin: 0 1px; border: 1px solid #2d78c4; border-bottom-color: #1a2a40; background: #232323; }
    .tab { display: flex; align-items: center; gap: 8px; height: 32px; padding: 0 7px 6px; color: #b0b0b0; }
    .sw { width: 10px; height: 10px; background: #b29d75; }
    .body { display: grid; grid-template-columns: 699px minmax(0, 1fr) 17px; }
    .left { border-right: 1px solid #000; }
    .ctl { display: flex; align-items: center; height: 30px; padding-bottom: 5px; }
    .time { width: 104px; padding-left: 10px; line-height: 14px; }
    .time b { display: block; font-size: 17px; line-height: 16px; color: #2d8ceb; }
    .time small { display: block; padding-left: 2px; font-size: 10px; line-height: 12px; color: #1f5c9c; white-space: nowrap; }
    .search { display: flex; align-items: center; width: 393px; height: 20px; padding-left: 5px; border: 1px solid #303030; border-radius: 2px; background: #181818; }
    .search input { flex: 1; }
    .icons, .icons div { display: flex; gap: 17px; color: #b4b4b4; }
    .icons { padding-left: 14px; }
    .icons .near { gap: 9px; }
    .cols { display: grid; grid-template-columns: 68px 32px 32px 130px 81px 14px 71px 137px 117px 1fr; align-items: center; height: 20px; padding-top: 1px; border: solid #000; border-width: 1px 0; background: #313131; color: #b4b4b4; }
    .cols > span { display: flex; align-items: center; height: 12px; padding-left: 6px; }
    .cols .line { border-right: 1px solid #000; }
    .cols .av { gap: 3px; padding-left: 5px; }
    .cols .av .ic, .cols .swt .ic { width: 12px; height: 12px; }
    .cols .lat { font-size: 11px; color: #999; padding-left: 2px; }
    .cols .tg { padding-left: 12px; }
    .cols .swt { gap: 3px; padding-left: 5px; }
    .cols .swt i { width: 12px; }
    .cut { display: flex; height: 4px; background: #2c2c2c; }
    .cut i { height: 3px; }
    .cut .p { width: 14px; margin-left: 85px; background: #5a5fc0; }
    .cut .n { width: 108px; margin-left: 55px; background: #a9a9a9; }
    .cut .q { flex: 1; background: #3d3d3d; margin-left: 3px; }
    .row { display: grid; grid-template-columns: 24px 239px 170px 1fr; height: 20px; border-bottom: 1px solid #1c1c1c; align-items: center; background: #262626; }
    .eye { display: grid; place-items: center; width: 14px; height: 14px; margin-left: 4px; background: #161616; color: #d0d0d0; }
    .name { display: flex; align-items: center; gap: 7px; height: 19px; color: #b9b9b9; }
    .name .lbl { flex: 1; padding-left: 4px; line-height: 21px; height: 19px; }
    .selected { background: #4b4b4b; }
    .d0 { padding-left: 67px; } .d1 { padding-left: 87px; } .d2 { padding-left: 107px; } .d3 { padding-left: 145px; } .d4 { padding-left: 145px; gap: 2px; }
    .d4 .ic { margin-bottom: 1px; }
    .val { grid-column: 4; display: flex; align-items: center; gap: 2px; }
    .dd { width: 127px; }
    .add { padding-left: 83px; display: flex; align-items: center; gap: 4px; }
    .num { display: flex; gap: 1px; font-size: 11px; padding-top: 2px; }
    .num b { color: #2d8ceb; font-weight: 500; }
    .rev { width: 17px; height: 16px; background: #151515; }
    .color { width: 24px; height: 18px; border: 1px solid #8a8a8a; background: #ee2f1c; }
    .drop { width: 24px; height: 18px; border: 1px solid #7a7a7a; color: #c4c4c4; }
    .foot { display: flex; align-items: center; height: 17px; border-top: 1px solid #000; gap: 4px; padding-left: 4px; }
    .foot .on { color: #2d8ceb; }
    .right { position: relative; overflow: hidden; }
    .nav { display: flex; height: 10px; border: 1px solid #000; background: #666; border-width: 1px 0; justify-content: space-between; }
    .cap { width: 7px; background: #2d8ceb; }
    .cap.l { border-radius: 6px 0 0 6px; } .cap.r { border-radius: 0 6px 6px 0; }
    .ruler { position: relative; height: 20px; margin: 0 7px; }
    .tick { position: absolute; bottom: 0; display: flex; flex-direction: column; align-items: center; width: 60px; margin-left: -30px; font-size: 10px; line-height: 14px; color: #b0b0b0; }
    .tick i { width: 1px; height: 4px; background: #777; }
    .work { display: flex; justify-content: space-between; height: 16px; background: #5f5f5f; border-top: 1px solid #000; }
    .cache { height: 3px; margin: 0 7px; background: #1e9c35; }
    .layer { height: 5px; margin: 0 7px; border: solid #000; border-width: 1px 0; background: #4f5a96; }
    .lane { height: 20px; margin-right: 7px; border-bottom: 1px solid #1f1f1f; background: #333; display: flex; align-items: center; }
    .lane svg { width: 6px; height: 12px; margin: 0 0 3px 4px; color: #9fb4c8; }
    .lane .key { color: #2d8ceb; }
    .head { position: absolute; left: 1px; top: 15px; width: 12px; bottom: 17px; }
    .head svg { display: block; width: 12px; height: 14px; }
    .head i { display: block; width: 1px; height: calc(100% - 14px); margin-left: 6px; background: #2d8ceb; }
    .zoomer { display: flex; align-items: center; gap: 10px; height: 17px; border-top: 1px solid #1a1a1a; padding-left: 3px; color: #b0b0b0; }
    .zoomer input { appearance: none; width: 50px; height: 12px; }
    .zoomer input::-webkit-slider-runnable-track { height: 2px; background: #444; }
    .zoomer input::-webkit-slider-thumb { appearance: none; width: 10px; height: 10px; margin-top: -4px; border: 2px solid #a8a8a8; border-radius: 50%; background: #232323; }
    .side { display: flex; flex-direction: column; color: #b4b4b4; }
    .side .top { display: grid; place-items: end center; height: 50px; padding-bottom: 3px; border-bottom: 1px solid #000; }
    .side .top .ic { width: 13px; height: 15px; }
    .side .cb { height: 18px; padding: 2px 1px; }
    .track { flex: 1; margin-bottom: 17px; background: #1c1c1c; }
    .track i { display: block; height: 86px; margin-top: 84px; border-radius: 8px; background: #303030; }
  `];
  render() {
    const ticks = Array.from({ length: 19 }, (_, i) => {
      const sec = Math.floor(i / 3);
      const text = i % 3 ? `${(i % 3) * 10}f` : i === 0 ? "0:00f" : `0${sec}:00f`;
      return html`<span class="tick" style=${styleMap({ left: `${(i * 1000) / 181}%` })}>${text}<i></i></span>`;
    });
    const btn = (n: string) => html`<button aria-label=${n}>${icon(n, "l")}</button>`;
    return html`
      <div class="tab">${icon("cross", "s")}<i class="sw"></i><span>合成 1</span>${icon("burger", "s")}</div>
      <div class="body">
        <div class="left">
          <div class="ctl">
            <div class="time"><b>0:00:00:00</b><small>00000 (30.00 fps)</small></div>
            <label class="search">${icon("lensMenu", "l")}<input aria-label="搜索图层" /></label>
            <div class="icons">${["miniFlow", "draft"].map(btn)}<div class="near">${["hideShy", "film", "blur"].map(btn)}</div>${btn("graph")}</div>
          </div>
          <div class="cols">
            <span class="av line">${["eye", "speaker", "dot", "lock"].map((n) => icon(n))}</span>
            <span class="tg">${icon("tag")}</span><span class="lat line">#</span><span class="line">源名称</span><span>模式</span>
            <span class="lat">T</span><span class="lat line">TrkMat</span>
            <span class="swt line">${["shy", "sun", "slash"].map((n) => icon(n))}<i>fx</i>${["film", "blur", "adjust", "cube"].map((n) => icon(n))}</span>
            <span class="line">父级</span><span></span>
          </div>
          <div class="cut"><i class="p"></i><i class="n"></i><i class="q"></i></div>
          ${rows.map((r) => html`<div class="row">
            <div>${r.eye ? html`<span class="eye">${icon("eye", "s")}</span>` : nothing}</div>
            <div class="name d${r.depth}">${r.mark ? icon(r.mark, r.mark === "watch" ? "m" : "s") : nothing}<span class=${classMap({ lbl: true, selected: !!r.selected })}>${r.name}</span></div>
            <div class="val">${r.value ?? nothing}</div>
          </div>`)}
          <div class="foot"><button class="on" aria-label="图层开关">${icon("layersA")}</button><button class="on" aria-label="转换控制">${icon("layersB")}</button><button aria-label="入点出点">${icon("braces")}</button></div>
        </div>
        <div class="right">
          <div class="nav"><i class="cap l"></i><i class="cap r"></i></div>
          <div class="ruler">${ticks}</div>
          <div class="work"><i class="cap l"></i><i class="cap r"></i></div>
          <div class="cache"></div>
          <div class="layer"></div>
          ${rows.map((r) => html`<div class="lane">${r.beam ? html`<svg class=${r.beam} viewBox="0 0 6 12"><path d="M0 .5h6M3 0v12M0 11.500h6" fill="none" stroke="currentColor" stroke-width="1.500"/></svg>` : nothing}</div>`)}
          <div class="zoomer">${icon("hillSmall")}<input type="range" min="0" max="100" value="0" aria-label="时间缩放" />${icon("hillBig", "l")}</div>
          <div class="head"><svg viewBox="0 0 12 14"><path d="M0 0h12v7l-5 7H6L0 7z" fill="#2d8ceb"/></svg><i></i></div>
        </div>
        <div class="side"><div class="top">${icon("marker")}</div><div class="cb">${icon("compButton")}</div><div class="track"><i></i></div></div>
      </div>`;
  }
}

@customElement("app-root")
class AppRoot extends LitElement {
  static styles = [base, css`
    :host { display: block; }
    .app { position: relative; display: flex; flex-direction: column; min-height: 100vh; overflow: hidden; background: #161616; }
    .work { flex: 1; display: grid; grid-template-columns: 319px minmax(0, 1fr) 219px; gap: 5px; padding: 4px 0 4px 2px; }
    .desk { height: 42px; background: #232323; }
    .note { position: absolute; left: 1356px; top: 145px; width: 460px; margin: 0; font-size: 49px; line-height: 82px; color: #f00; font-family: "Noto Sans CJK SC", sans-serif; pointer-events: none; }
    .pointer { position: absolute; left: 1170px; top: 236px; width: 164px; height: 80px; pointer-events: none; }
    .mark { position: absolute; right: 18px; top: 14px; display: flex; align-items: center; gap: 1px; pointer-events: none; font-family: "Noto Sans CJK SC", sans-serif; font-size: 47px; line-height: 58px; font-weight: 700; color: transparent; -webkit-text-stroke: 1px rgba(165, 165, 170, 0.85); }
    .mark svg { width: 72px; height: 48px; }
  `];
  render() {
    return html`<div class="app">
      <title-bar></title-bar>
      <tool-bar></tool-bar>
      <main class="work"><project-panel></project-panel><comp-viewer></comp-viewer><side-panels></side-panels></main>
      <time-line></time-line>
      <div class="desk"></div>
      <svg class="pointer" viewBox="1170 236 164 80"><path d="M1324 244L1198 298" stroke="#f00" stroke-width="10" stroke-linecap="round"/><path d="M1173 310l21-26 12 28z" fill="#f00"/></svg>
      <p class="note">①断开路径可看到线段端点</p>
      <div class="mark"><svg viewBox="0 0 72 48" fill="none" stroke="rgb(165,165,170)" stroke-opacity=".85" stroke-width="1.500">
        <path d="M1 7q12 0 14 10v16q0 12 11 12h34q11 0 11-12V17q-1-11-12-11h-4l1-4-4-1-2 5H33l2-5-4-1-3 6h-4q-5 1-7 5M1 11q9 1 10 7"/>
        <path d="M24 10q-5 2-5 8v15q0 8 8 8h32q8 0 8-8V17q0-7-7-7M28 10h30v4H28zM32 18h24v4H32zM27 26h32v4H27zM36 6v4M50 6v4M36 34v8l8-4z"/>
      </svg><span>虎课网</span></div>
    </div>`;
  }
}
